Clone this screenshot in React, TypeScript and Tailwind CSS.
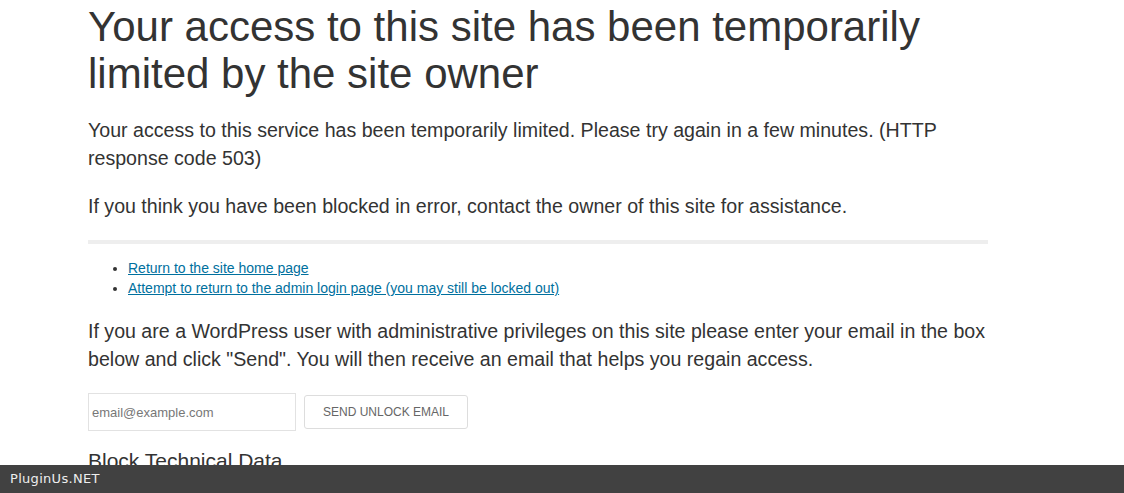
import React from "react";

export default function App() {
  return (
    <div className="relative min-h-[493px] bg-white font-['Liberation_Sans',Arial,sans-serif] text-[#333]">
      <div className="mx-[88px] w-[900px] pb-[60px]">
        <h1 className="pt-[3px] text-[42px] font-normal leading-[47px] text-[#333]">
          Your access to this site has been temporarily limited by the site owner
        </h1>
        <p className="mt-[19px] text-[19.6px] leading-[28px]">
          Your access to this service has been temporarily limited. Please try again in a few minutes. (HTTP response code 503)
        </p>
        <p className="mt-[20px] text-[19.6px] leading-[28px]">
          If you think you have been blocked in error, contact the owner of this site for assistance.
        </p>
        <hr className="mt-[20px] h-[4px] border-0 bg-[#eeeeee]" />
        <ul className="mt-[14px] list-disc pl-[40px] text-[14px] leading-[20px] marker:text-[#333]">
          <li>
            <a href="#" className="text-[#00709e] underline">Return to the site home page</a>
          </li>
          <li>
            <a href="#" className="text-[#00709e] underline">Attempt to return to the admin login page (you may still be locked out)</a>
          </li>
        </ul>
        <p className="mt-[19px] text-[19.6px] leading-[28px]">
          If you are a WordPress user with administrative privileges on this site please enter your email in the box below and click "Send". You will then receive an email that helps you regain access.
        </p>
        <div className="mt-[20px] flex items-center gap-[8px]">
          <input
            type="text"
            placeholder="email@example.com"
            className="h-[38px] w-[208px] border border-[#e2e2e2] px-[3px] text-[13px] text-[#555] placeholder:text-[#777] outline-none"
          />
          <button className="h-[34px] w-[164px] rounded-[3px] border border-[#dddddd] bg-white text-[12px] uppercase text-[#666]">
            Send Unlock Email
          </button>
        </div>
        <h2 className="mt-[16px] text-[21px] font-normal leading-[28px] text-[#333]">Block Technical Data</h2>
      </div>
      <div className="fixed bottom-0 left-0 right-0 flex h-[28px] items-center bg-[#414141] px-[10px] font-['DejaVu_Sans',sans-serif] text-[13px] tracking-[0.3px] text-[#eeeeee]">
        PluginUs.NET
      </div>
    </div>
  );
}
